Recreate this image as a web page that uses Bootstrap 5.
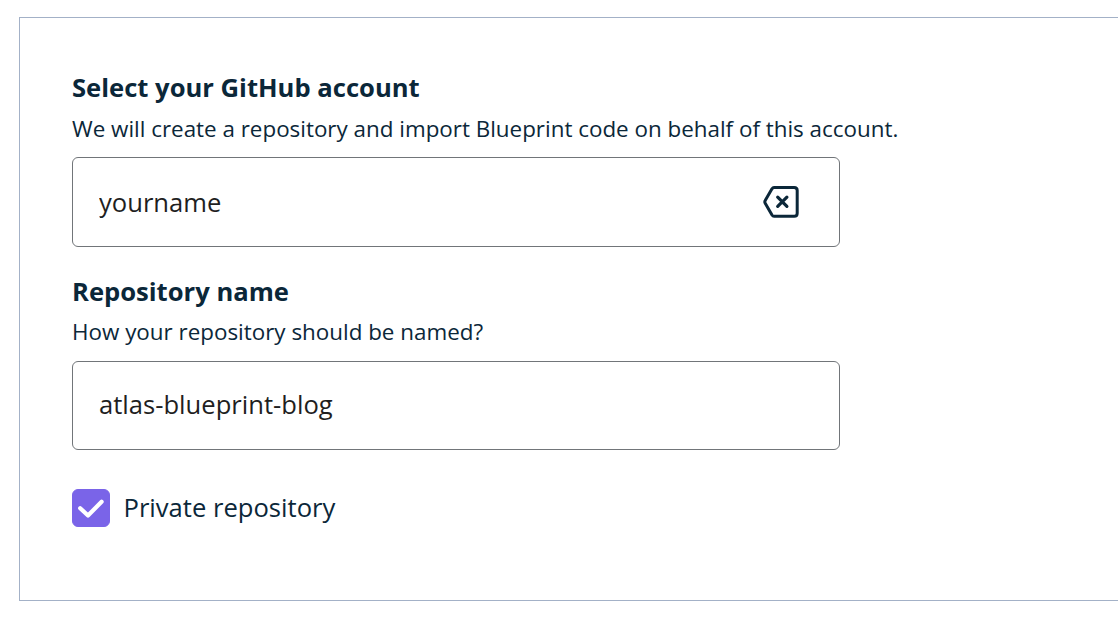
<!DOCTYPE html>
<html lang="en">
<head>
<meta charset="utf-8">
<meta name="viewport" content="width=device-width, initial-scale=1">
<title>Repository settings</title>
<link href="https://cdn.jsdelivr.net/npm/bootstrap@5.3.0/dist/css/bootstrap.min.css" rel="stylesheet">
<style>
body { font-family: "Open Sans", sans-serif; color: #0b2739; background: #fff; overflow: hidden; }
.panel { margin: 17px 0 0 19px; height: 584px; padding: 52px 0 0 52px; border: 1px solid #a3b1c7; border-right: 0; }
.field-title { font-size: 25.6px; line-height: 36px; font-weight: 700; display: block; margin: 0 0 5px; }
.field-help { font-size: 22.4px; line-height: 36px; margin: 0 0 10px; }
.repo-title { margin-bottom: 4px; }
.repo-help { margin-bottom: 11px; }
.field-box { width: 768px; height: 90px; border: 1px solid #717579; border-radius: 6px; padding: 0 40px 0 26px; margin-bottom: 27px; }
.field-box.repo { height: 89px; margin-bottom: 39px; padding-bottom: 3px; }
.field-box .form-control { font-size: 25.6px; line-height: 36px; color: #1f1f1f; padding: 2px 0 0; }
.option .form-check-input { width: 38px; height: 38px; border-radius: 6px; }
.option .form-check-input:checked { background-color: #7a64e8; border-color: #7a64e8; background-size: 38px 38px; background-position: center;
  background-image: url("data:image/svg+xml,%3Csvg xmlns='http://www.w3.org/2000/svg' viewBox='0 0 38 38'%3E%3Cpath d='M8.2 19.2L16 26.5L29.6 12.8' fill='none' stroke='white' stroke-width='4.2' stroke-linecap='round' stroke-linejoin='round'/%3E%3C/svg%3E"); }
.option label { font-size: 25.6px; line-height: 38px; margin-left: 13.5px; }
</style>
</head>
<body>
<form class="panel">
  <label class="field-title" for="account">Select your GitHub account</label>
  <p class="field-help">We will create a repository and import Blueprint code on behalf of this account.</p>
  <div class="field-box d-flex align-items-center">
    <input id="account" type="text" class="form-control border-0 shadow-none" value="yourname">
    <button type="button" class="btn border-0 p-0 d-flex flex-shrink-0" aria-label="Clear">
      <svg width="36" height="34" viewBox="0 0 36 34" fill="none" stroke="#0b2739" stroke-width="3" stroke-linecap="round" stroke-linejoin="round"><path d="M11 2.6H31.2Q34.2 2.6 34.2 5.6V28.2Q34.2 31.2 31.2 31.2H11Q9.8 31.2 9 30L2.2 18.2Q1.4 16.9 2.2 15.6L9 3.8Q9.8 2.6 11 2.6Z"/><path stroke-width="3.2" d="M14.7 12.2L23.9 21.4M23.9 12.2L14.7 21.4"/></svg>
    </button>
  </div>
  <label class="field-title repo-title" for="repo">Repository name</label>
  <p class="field-help repo-help">How your repository should be named?</p>
  <div class="field-box repo d-flex align-items-center">
    <input id="repo" type="text" class="form-control border-0 shadow-none" value="atlas-blueprint-blog">
  </div>
  <div class="option d-flex align-items-center">
    <input id="private" class="form-check-input m-0 flex-shrink-0" type="checkbox" checked>
    <label for="private">Private repository</label>
  </div>
</form>
<script src="https://cdn.jsdelivr.net/npm/bootstrap@5.3.0/dist/js/bootstrap.bundle.min.js"></script>
</body>
</html>
